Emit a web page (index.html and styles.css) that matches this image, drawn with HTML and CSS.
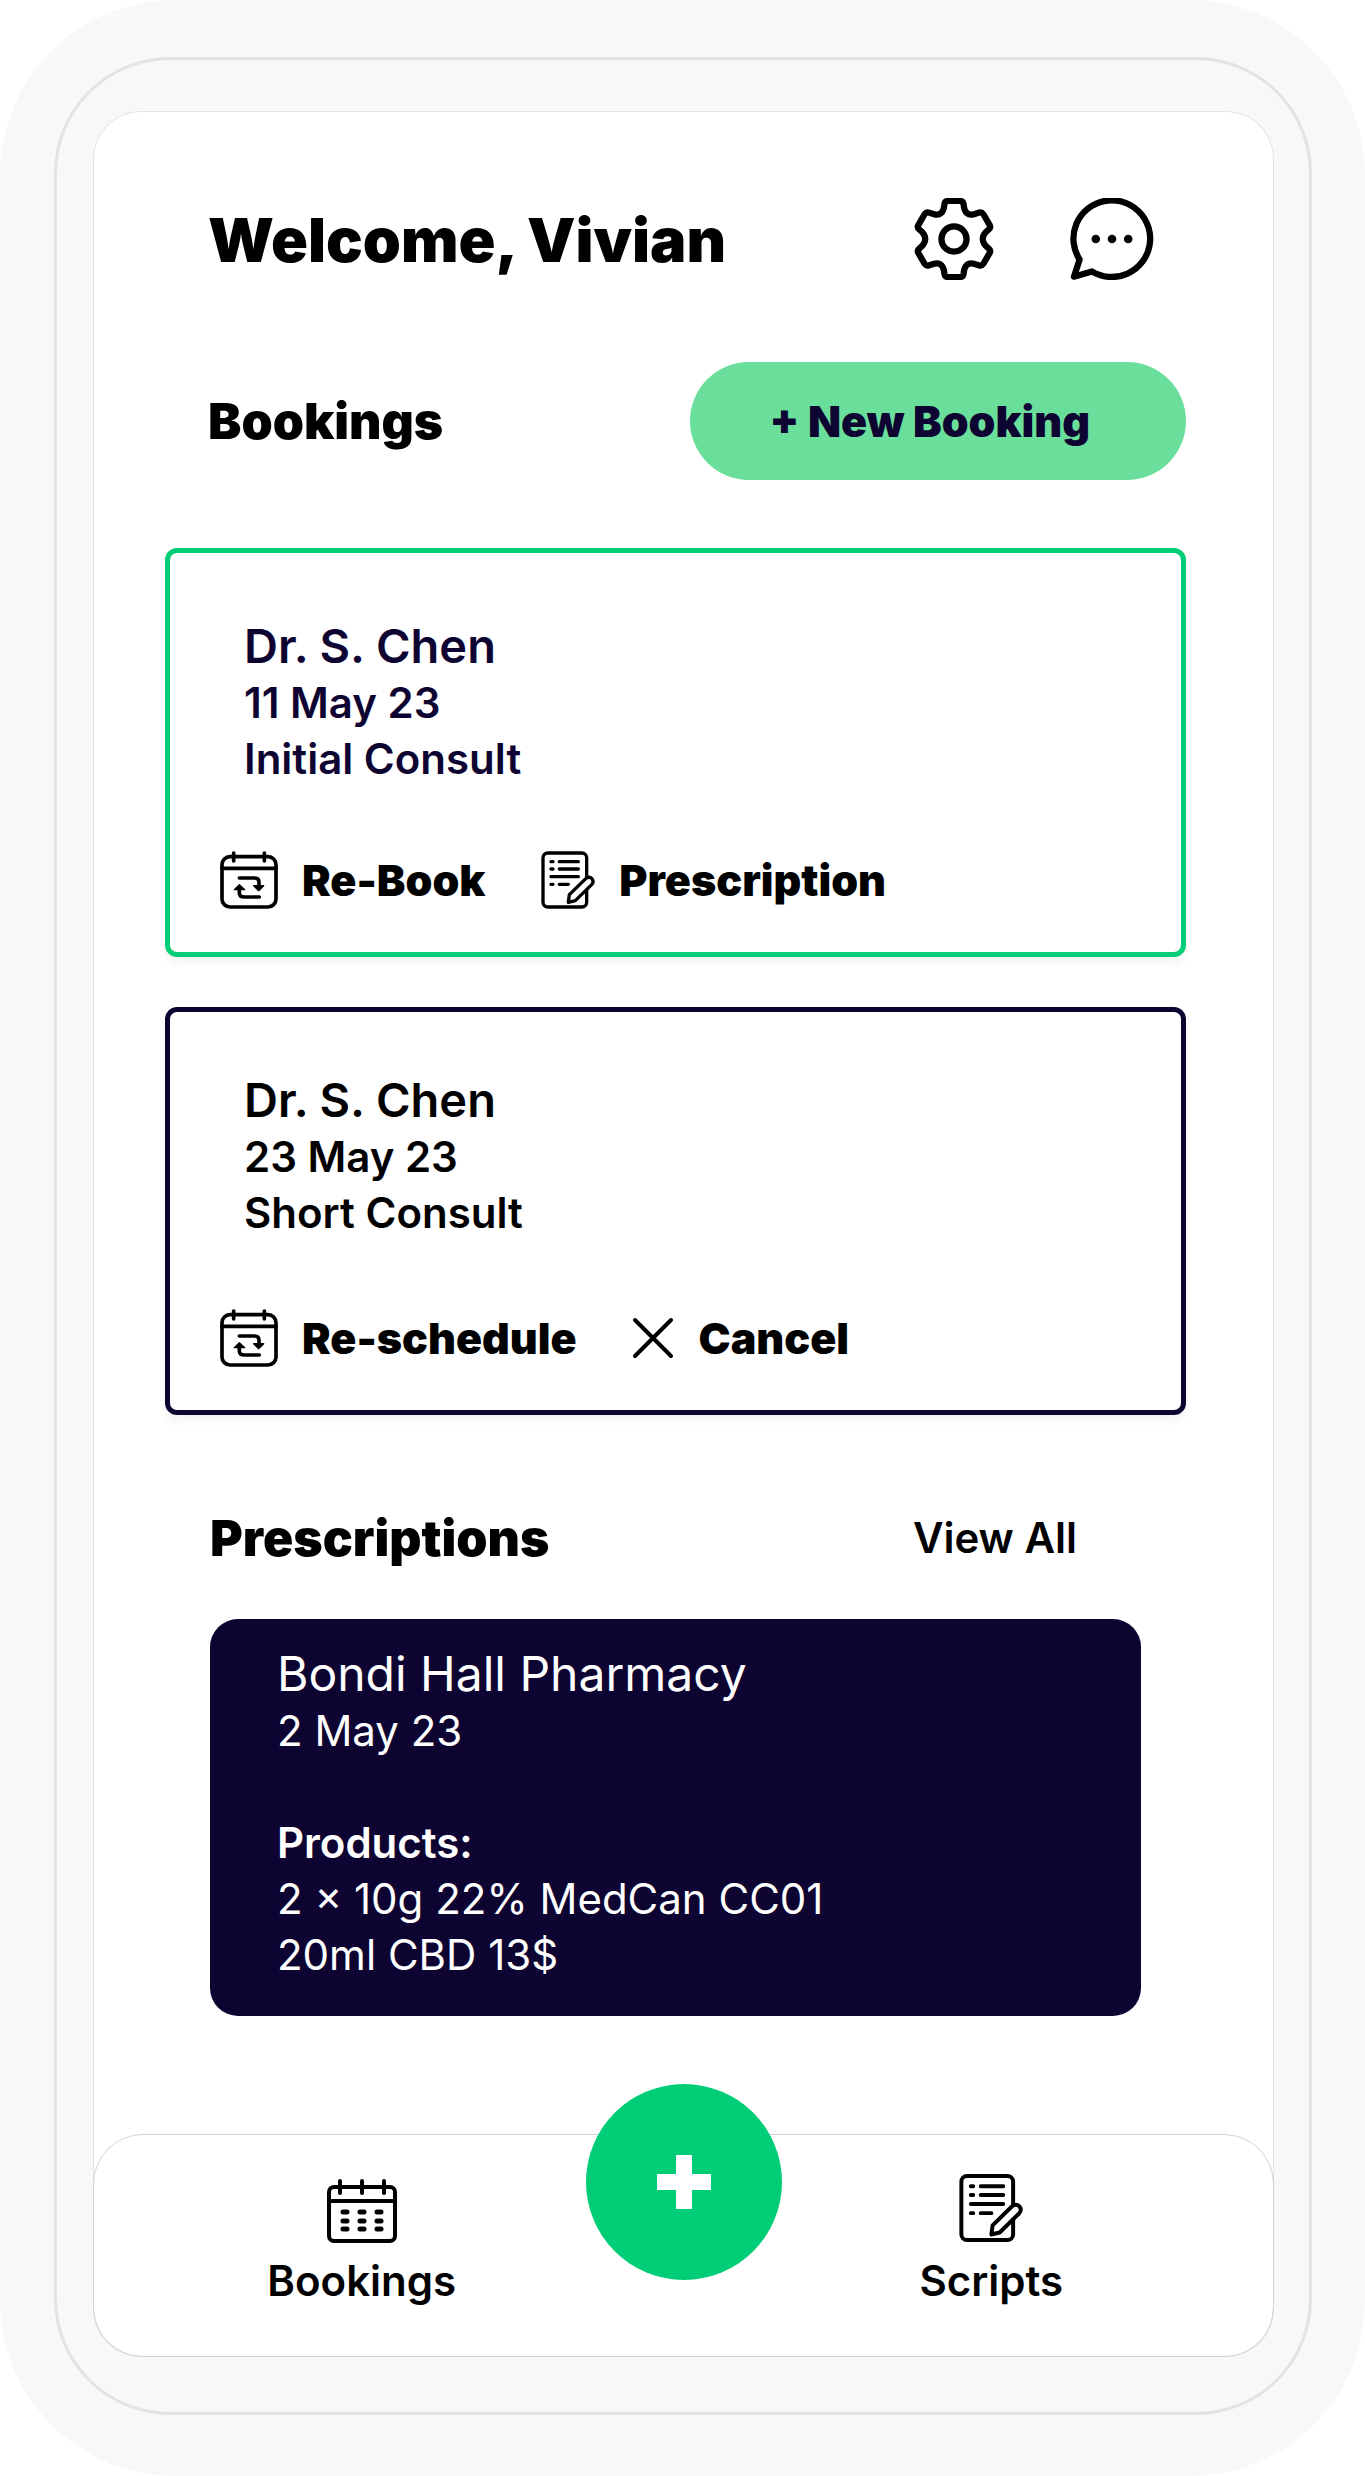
FILE: index.html
```html
<!DOCTYPE html>
<html lang="en">
<head>
    <meta charset="UTF-8">
    <meta name="viewport" content="width=device-width, initial-scale=1.0">
    <title>Patient Dashboard</title>
    <link rel="stylesheet" href="styles.css">
</head>
<body>
    <!-- shared icons -->
    <svg class="sprite" aria-hidden="true">
        <symbol id="icon-rebook" viewBox="210 962 174 174">
            <g fill="none" stroke="currentColor" stroke-width="11" stroke-linecap="round" stroke-linejoin="round">
                <rect x="216" y="979" width="162" height="151" rx="24" />
                <path d="M216 1014H378M251 968V992M343 968V992" />
                <path d="M268 1043H314Q327 1043 327 1056V1068M328 1100H283Q268 1100 268 1087V1074" />
            </g>
            <path d="M311 1066H341L326 1081ZM253 1078H284L268 1063Z" fill="currentColor" stroke="currentColor" stroke-width="4" stroke-linejoin="round" />
        </symbol>
        <symbol id="icon-script" viewBox="1187 960 162 174">
            <g fill="none" stroke="currentColor" stroke-width="10" stroke-linecap="round" stroke-linejoin="round">
                <rect x="1193" y="966" width="131" height="162" rx="14" />
                <path d="M1217 992H1223M1242 992H1299M1217 1014H1223M1242 1014H1299M1217 1037H1299M1217 1060H1223M1242 1060H1269" />
                <path d="M1269 1114L1272 1091L1322 1042Q1332 1035 1340 1043Q1347 1052 1339 1061L1290 1109Z" fill="#fff" />
            </g>
        </symbol>
    </svg>

    <div class="phone">
        <div class="bezel">
            <div class="screen">
                <header class="header">
                    <h1>Welcome, Vivian</h1>
                    <div class="header-icons">
                        <button class="icon-button" aria-label="Settings">
                            <svg class="icon-gear" viewBox="146 594 240 248" fill="none" stroke="currentColor" stroke-width="19" stroke-linejoin="round">
                                <path d="M248 603H284Q294 603 295 613C297 640 310 648 326 643L343 638Q350 636 355 643L374 676Q378 684 371 689C347 707 347 729 371 747Q378 752 374 760L355 793Q350 800 343 798L326 793C310 788 297 796 295 823Q294 833 284 833H248Q238 833 237 823C235 796 222 788 206 793L189 798Q182 800 177 793L158 760Q154 752 161 747C185 729 185 707 161 689Q154 684 158 676L177 643Q182 636 189 638L206 643C222 648 235 640 237 613Q238 603 248 603Z" />
                                <circle cx="266" cy="718" r="38" />
                            </svg>
                        </button>
                        <button class="icon-button" aria-label="Messages">
                            <svg class="icon-chat" viewBox="615 594 252 248">
                                <path d="M643 780L626 832L680 816A116 116 0 1 0 643 780Z" fill="none" stroke="currentColor" stroke-width="19" stroke-linejoin="round" />
                                <g fill="currentColor">
                                    <circle cx="692" cy="718" r="13" />
                                    <circle cx="741" cy="718" r="13" />
                                    <circle cx="790" cy="718" r="13" />
                                </g>
                            </svg>
                        </button>
                    </div>
                </header>

                <main>
                    <section class="bookings" id="bookings">
                        <div class="bookings-top">
                            <h2>Bookings</h2>
                            <button class="new-booking">+ New Booking</button>
                        </div>

                        <article class="card card-past">
                            <h3>Dr. S. Chen</h3>
                            <p>11 May 23</p>
                            <p>Initial Consult</p>
                            <div class="actions">
                                <button><svg class="icon-rebook"><use href="#icon-rebook" /></svg>Re-Book</button>
                                <button><svg class="icon-script"><use href="#icon-script" /></svg>Prescription</button>
                            </div>
                        </article>

                        <article class="card card-next">
                            <h3>Dr. S. Chen</h3>
                            <p>23 May 23</p>
                            <p>Short Consult</p>
                            <div class="actions">
                                <button><svg class="icon-rebook"><use href="#icon-rebook" /></svg>Re-schedule</button>
                                <button>
                                    <svg class="icon-cancel" viewBox="0 0 42 42" fill="none" stroke="currentColor" stroke-width="4" stroke-linecap="round">
                                        <path d="M3 3L39 39M39 3L3 39" />
                                    </svg>
                                    Cancel
                                </button>
                            </div>
                        </article>
                    </section>

                    <section class="prescriptions" id="scripts">
                        <div class="prescriptions-top">
                            <h2>Prescriptions</h2>
                            <a href="#scripts">View All</a>
                        </div>
                        <article class="script">
                            <h3>Bondi Hall Pharmacy</h3>
                            <p>2 May 23</p>
                            <h4>Products:</h4>
                            <p>2 × 10g 22% MedCan CC01</p>
                            <p>20ml CBD 13$</p>
                        </article>
                    </section>
                </main>

                <nav class="tabs">
                    <a href="#bookings">
                        <svg class="icon-calendar" viewBox="0 0 70 64" fill="none" stroke="currentColor" stroke-width="4" stroke-linecap="round">
                            <rect x="2" y="8" width="66" height="54" rx="5" />
                            <path d="M2 22H68M13 2V14M35 2V14M57 2V14" />
                            <path d="M16 33H20M33 33H37M50 33H54M16 42H20M33 42H37M50 42H54M16 50H20M33 50H37M50 50H54" stroke-width="5" />
                        </svg>
                        Bookings
                    </a>
                    <button class="add" aria-label="Add">
                        <svg viewBox="0 0 54 54"><path d="M19 0H35V19H54V35H35V54H19V35H0V19H19Z" fill="#fff" /></svg>
                    </button>
                    <a href="#scripts">
                        <svg class="icon-script-large"><use href="#icon-script" /></svg>
                        Scripts
                    </a>
                </nav>
            </div>
        </div>
    </div>
</body>
</html>
```
FILE: styles.css
```css
* {
    box-sizing: border-box;
}

body {
    margin: 0;
    background-color: #fff;
    color: #000;
    font-family: Inter, "Liberation Sans", sans-serif;
    font-size: 42px;
    line-height: 56px;
}

h1, h2, h3, h4, p {
    margin: 0;
}

h1 {
    font-size: 61px;
    font-weight: 900;
    line-height: 84px;
}

h2 {
    font-size: 50px;
    font-weight: 900;
    line-height: 62px;
}

h3 {
    font-size: 48px;
    font-weight: 400;
    line-height: 58px;
}

button {
    padding: 0;
    border: none;
    background: none;
    color: inherit;
    font: inherit;
    cursor: pointer;
}

a {
    color: inherit;
    text-decoration: none;
}

svg {
    display: block;
    flex: none;
}

.sprite {
    position: absolute;
    width: 0;
    height: 0;
}

.phone {
    padding: 57px 53px 61px 54px;
    border-radius: 175px;
    background-color: #f8f8f8;
}

.bezel {
    padding: 51px 35px 55px 36px;
    border: 3px solid #e3e3e3;
    border-radius: 116px;
}

.screen {
    border-radius: 48px;
    background-color: #fff;
    box-shadow: inset 0 0 0 1px #e3e3e3;
}

.header {
    display: flex;
    justify-content: space-between;
    padding: 87px 120px 0 115px;
}

.header-icons {
    display: flex;
    gap: 76px;
    height: 82px;
}

.icon-gear {
    width: 80px;
    height: 82px;
}

.icon-chat {
    width: 84px;
    height: 82px;
}

.bookings {
    display: flex;
    flex-direction: column;
    gap: 50px;
    padding: 80px 88px 0 72px;
}

.bookings-top {
    display: flex;
    justify-content: space-between;
    align-items: center;
    margin-bottom: 18px;
    padding-left: 43px;
}

.new-booking {
    padding: 31px 96px 31px 80px;
    border-radius: 60px;
    background-color: #6adf9c;
    color: #0e0432;
    font-size: 43px;
    font-weight: 900;
}

.card {
    padding: 64px 50px 42px;
    border: 5px solid #0e0432;
    border-radius: 12px;
    box-shadow: 0 6px 8px rgba(0, 0, 0, 0.05);
    font-weight: 600;
}

.card h3, .card p {
    padding-left: 24px;
}

.card h3 {
    font-size: 47px;
    font-weight: 600;
}

.card-past {
    border-color: #00ce76;
}

.card-past h3, .card-past p {
    color: #0e0432;
}

.card-next {
    padding-top: 59px;
}

.actions {
    display: flex;
    gap: 56px;
    margin-top: 63px;
}

.card-next .actions {
    margin-top: 67px;
}

.actions button {
    display: flex;
    align-items: center;
    height: 60px;
    gap: 24px;
    font-size: 43px;
    font-weight: 900;
}

.icon-rebook {
    width: 58px;
    height: 58px;
}

.icon-script {
    width: 54px;
    height: 58px;
}

.icon-cancel {
    width: 42px;
    height: 42px;
}

.prescriptions {
    padding: 92px 133px 118px 117px;
}

.prescriptions-top {
    display: flex;
    justify-content: space-between;
    align-items: center;
    margin-bottom: 50px;
    padding-right: 64px;
}

.prescriptions-top a {
    font-weight: 600;
}

.script {
    padding: 26px 67px 33px;
    border-radius: 28px;
    background-color: #0e0432;
    color: #fff;
}

.script h4 {
    margin-top: 56px;
    font-size: 42px;
    font-weight: 600;
}

.tabs {
    display: grid;
    grid-template-columns: 1fr 196px 1fr;
    justify-items: center;
    height: 223px;
    border: 1px solid #d3d3d3;
    border-radius: 50px;
}

.tabs a {
    display: flex;
    flex-direction: column;
    align-items: center;
    justify-content: flex-end;
    gap: 10px;
    height: 174px;
    font-weight: 600;
}

.tabs a:first-child {
    margin-left: 44px;
}

.tabs a:last-child {
    margin-right: 72px;
}

.add {
    display: grid;
    place-items: center;
    width: 196px;
    height: 196px;
    margin-top: -51px;
    border-radius: 50%;
    background-color: #00ce76;
}

.add svg {
    width: 54px;
    height: 54px;
}

.icon-calendar {
    width: 70px;
    height: 64px;
}

.icon-script-large {
    width: 64px;
    height: 70px;
}
```
